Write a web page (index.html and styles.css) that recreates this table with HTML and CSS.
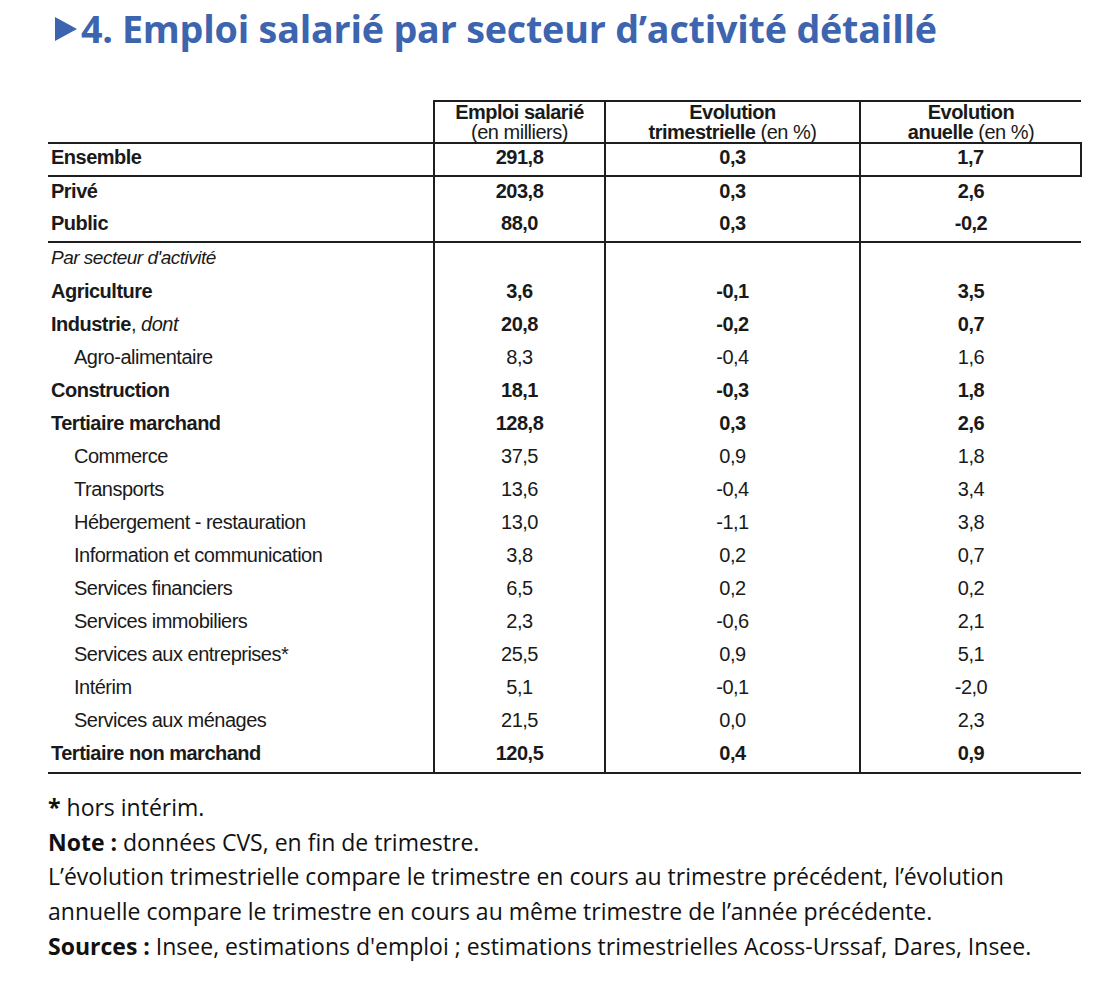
FILE: index.html
```html
<!DOCTYPE html>
<html lang="fr">
<head>
<meta charset="utf-8">
<title>Emploi salarié par secteur d'activité détaillé</title>
<link rel="stylesheet" href="styles.css">
</head>
<body>
<div class="page">
  <h1 class="title">
    <svg class="tri" width="22" height="24" viewBox="0 0 22 24"><polygon points="0,0 22,12 0,24" fill="#3d64ae"/></svg>
    <span class="num">4.</span><span>Emploi salarié par secteur d’activité détaillé</span>
  </h1>

  <table class="tbl">
    <colgroup>
      <col class="c1"><col class="c2"><col class="c3"><col class="c4">
    </colgroup>
    <thead>
      <tr class="head">
        <th class="lbl empty"></th>
        <th><b>Emploi salarié</b><br>(en milliers)</th>
        <th><b>Evolution</b><br><b>trimestrielle</b> (en %)</th>
        <th><b>Evolution</b><br><b>anuelle</b> (en %)</th>
      </tr>
    </thead>
    <tbody>
      <tr class="b sep boxed top"><td class="lbl">Ensemble</td><td>291,8</td><td>0,3</td><td class="last">1,7</td></tr>
      <tr class="b top"><td class="lbl">Privé</td><td>203,8</td><td>0,3</td><td>2,6</td></tr>
      <tr class="b sep short top"><td class="lbl">Public</td><td>88,0</td><td>0,3</td><td>-0,2</td></tr>
      <tr class="section"><td class="lbl"><i>Par secteur d'activité</i></td><td></td><td></td><td></td></tr>
      <tr class="b"><td class="lbl">Agriculture</td><td>3,6</td><td>-0,1</td><td>3,5</td></tr>
      <tr class="b"><td class="lbl">Industrie<span class="n">, <i>dont</i></span></td><td>20,8</td><td>-0,2</td><td>0,7</td></tr>
      <tr><td class="lbl sub">Agro-alimentaire</td><td>8,3</td><td>-0,4</td><td>1,6</td></tr>
      <tr class="b"><td class="lbl">Construction</td><td>18,1</td><td>-0,3</td><td>1,8</td></tr>
      <tr class="b"><td class="lbl">Tertiaire marchand</td><td>128,8</td><td>0,3</td><td>2,6</td></tr>
      <tr><td class="lbl sub">Commerce</td><td>37,5</td><td>0,9</td><td>1,8</td></tr>
      <tr><td class="lbl sub">Transports</td><td>13,6</td><td>-0,4</td><td>3,4</td></tr>
      <tr><td class="lbl sub">Hébergement - restauration</td><td>13,0</td><td>-1,1</td><td>3,8</td></tr>
      <tr><td class="lbl sub">Information et communication</td><td>3,8</td><td>0,2</td><td>0,7</td></tr>
      <tr><td class="lbl sub">Services financiers</td><td>6,5</td><td>0,2</td><td>0,2</td></tr>
      <tr><td class="lbl sub">Services immobiliers</td><td>2,3</td><td>-0,6</td><td>2,1</td></tr>
      <tr><td class="lbl sub">Services aux entreprises*</td><td>25,5</td><td>0,9</td><td>5,1</td></tr>
      <tr><td class="lbl sub">Intérim</td><td>5,1</td><td>-0,1</td><td>-2,0</td></tr>
      <tr><td class="lbl sub">Services aux ménages</td><td>21,5</td><td>0,0</td><td>2,3</td></tr>
      <tr class="b sep lastrow"><td class="lbl">Tertiaire non marchand</td><td>120,5</td><td>0,4</td><td>0,9</td></tr>
    </tbody>
  </table>

  <div class="notes">
    <p><b>*</b> hors intérim.</p>
    <p><b>Note :</b> données CVS, en fin de trimestre.</p>
    <p>L’évolution trimestrielle compare le trimestre en cours au trimestre précédent, l’évolution annuelle compare le trimestre en cours au même trimestre de l’année précédente.</p>
    <p><b>Sources :</b> Insee, estimations d'emploi ; estimations trimestrielles Acoss-Urssaf, Dares, Insee.</p>
  </div>
</div>
</body>
</html>
```

FILE: styles.css
```css
html, body {
  margin: 0;
  padding: 0;
  background: #ffffff;
}

.page {
  padding: 5px 0 0 48px;
  width: 1033px;
}

.title {
  display: flex;
  align-items: center;
  margin: 0 0 47px 0;
  font-family: "Open Sans", "Noto Sans", sans-serif;
  font-weight: 700;
  font-size: 37.7px;
  line-height: 48px;
  color: #3d64ae;
  letter-spacing: -0.2px;
}

.tri {
  margin-left: 7px;
  margin-right: 4px;
  flex: none;
}

.num {
  margin-right: 9px;
}

.tbl {
  border-collapse: collapse;
  width: 1033px;
  table-layout: fixed;
  font-family: "Liberation Sans", Arial, sans-serif;
  font-size: 20px;
  letter-spacing: -0.5px;
  color: #1a1a1a;
}

.c1 { width: 386px; }
.c2 { width: 171px; }
.c3 { width: 255px; }
.c4 { width: 221px; }

.tbl th,
.tbl td {
  padding: 0;
  text-align: center;
  border-left: 2px solid #1e1e1e;
  height: 33px;
  vertical-align: middle;
}

.tbl .lbl {
  text-align: left;
  border-left: none;
  padding-left: 3px;
}

.tbl .lbl.sub {
  padding-left: 26px;
}

.head th {
  font-weight: 400;
  line-height: 20px;
  height: 38px;
  border-top: 2px solid #1e1e1e;
  border-bottom: 2px solid #1e1e1e;
  vertical-align: top;
  padding-top: 0;
}

.head th.empty {
  border-top: none;
}

.tbl .b td {
  font-weight: 700;
}

.tbl .b .n {
  font-weight: 400;
}

.tbl .sep td {
  border-bottom: 2px solid #1e1e1e;
}

.tbl .top td {
  padding-bottom: 5px;
  height: 28px;
}

.tbl .boxed td,
.tbl .short td {
  height: 26px;
}

.tbl .lastrow td {
  padding-bottom: 2px;
}

.tbl .boxed .last {
  border-right: 2px solid #1e1e1e;
}

.section td {
  height: 28px;
  vertical-align: top;
  padding-top: 4px;
}

.section .lbl {
  font-size: 19px;
}

.notes {
  margin-top: 16px;
  font-family: "Open Sans", "Noto Sans", sans-serif;
  font-size: 23px;
  line-height: 34.7px;
  color: #111111;
  letter-spacing: 0;
  width: 1010px;
}

.notes p {
  margin: 0;
}

.notes b {
  font-weight: 700;
}
```
